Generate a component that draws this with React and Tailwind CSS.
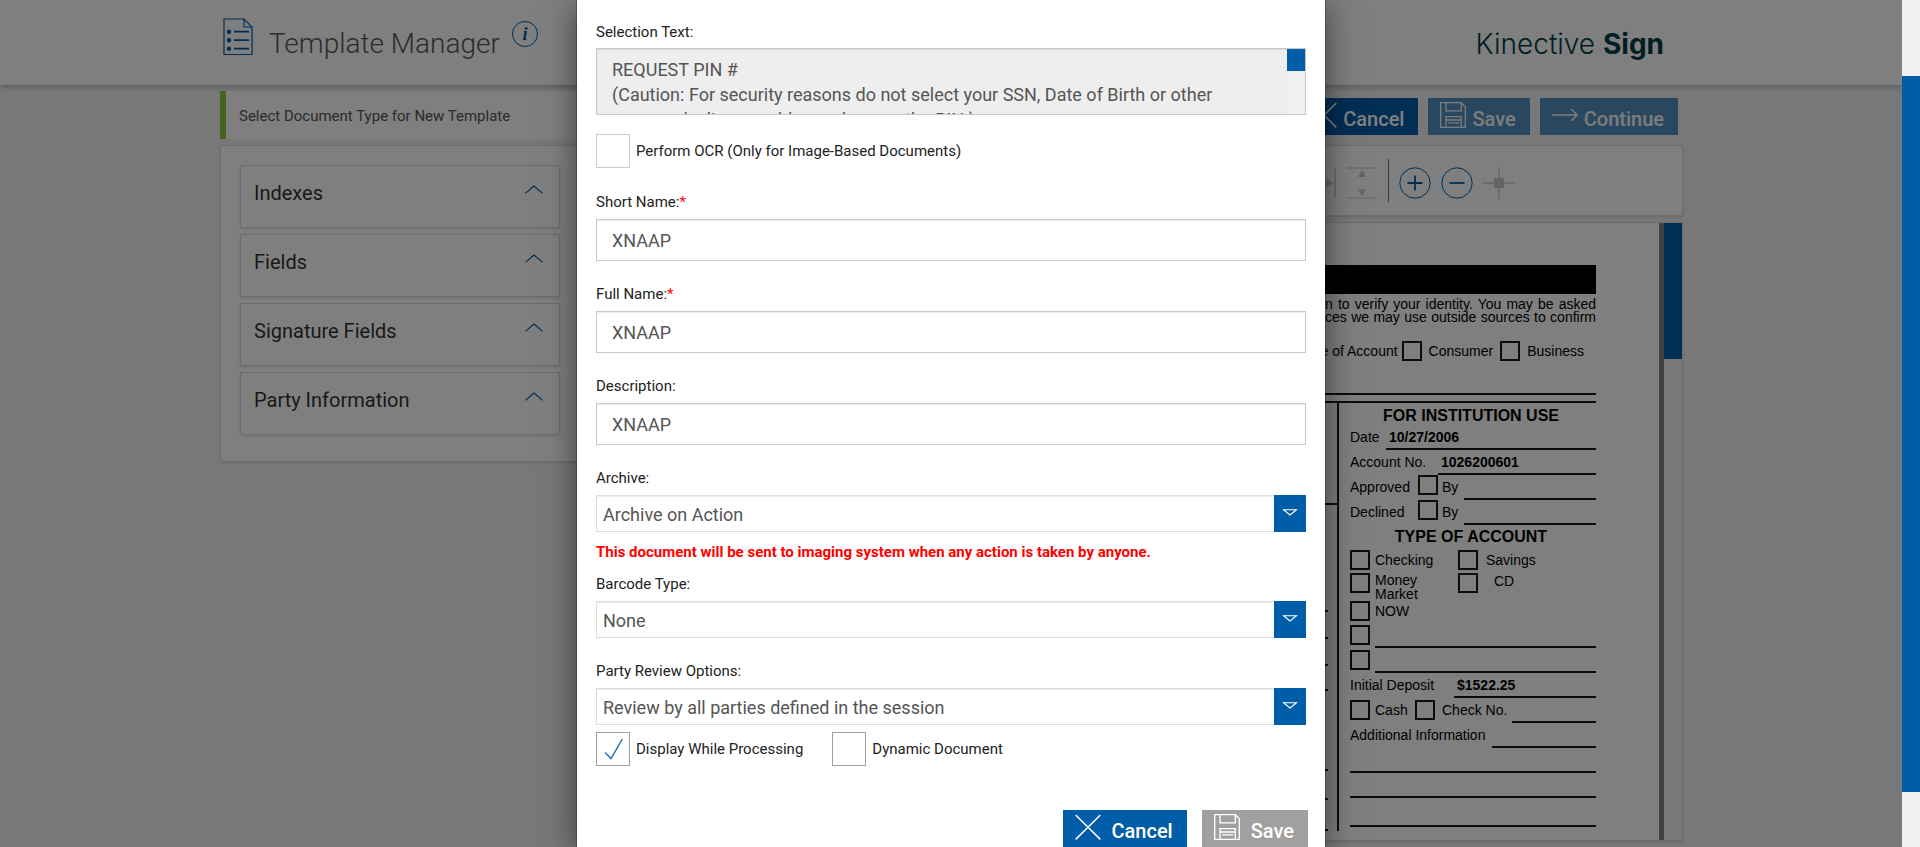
import React, { useState } from 'react';
import clsx from 'clsx';

const SELECTION_TEXT = `REQUEST PIN #
(Caution: For security reasons do not select your SSN, Date of Birth or other
commonly discoverable numbers as the PIN.)`;

const SECTIONS = ['Indexes', 'Fields', 'Signature Fields', 'Party Information'];

/* ---------- icons ---------- */

const CloseIcon = () => (
  <svg width="26" height="26" viewBox="0 0 26 26" fill="none" stroke="currentColor" strokeWidth="1.5">
    <path d="M.7 1l24.6 24.4M25.3 1L.7 25.4" />
  </svg>
);

const SaveIcon = () => (
  <svg width="26" height="26" viewBox="0 0 26 26" fill="none" stroke="currentColor" strokeWidth="1.3">
    <path d="M.7.7h20.6l4 4v20.6H.7z" />
    <path d="M6 .7v8.2h15.3V.7M6 25.3V14.6h15.3v10.7M6 18h15.3M8.2 20.8h11" />
  </svg>
);

const ArrowIcon = () => (
  <svg width="26" height="26" viewBox="0 0 26 26" fill="none" stroke="currentColor" strokeWidth="1.5">
    <path d="M0 13h25M19 7l6.2 6-6.2 6" />
  </svg>
);

const DocumentListIcon = () => (
  <svg width="30" height="38" viewBox="0 0 30 38" fill="none" stroke="#005da8" strokeWidth="1.2">
    <path d="M1 1h20l8 8v27.5H1z" />
    <path d="M21 1v8h8" />
    <path d="M11 13.7h15M11 22.2h15M11 30.7h15" strokeWidth="1.7" />
    <circle cx="6" cy="13.7" r="1.6" fill="#005da8" />
    <circle cx="6" cy="22.2" r="1.6" fill="#005da8" />
    <circle cx="6" cy="30.7" r="1.6" fill="#005da8" />
  </svg>
);

const ChevronUp = () => (
  <svg width="18" height="9" viewBox="0 0 18 9" fill="none" stroke="#005da8" strokeWidth="1.2">
    <path d="M.4 8.4L9 1l8.6 7.4" />
  </svg>
);

const FitWidthIcon = () => (
  <svg width="32" height="32" viewBox="0 0 32 32" fill="#c9c9c9" stroke="#c9c9c9">
    <path d="M1 1v30M31 1v30" strokeWidth="1.5" />
    <path d="M9 12.5L3 16l6 3.5zM22 11.5l7.5 4.5-7.5 4.5z" stroke="none" />
  </svg>
);

const FitHeightIcon = () => (
  <svg width="32" height="32" viewBox="0 0 32 32" fill="#c9c9c9" stroke="#c9c9c9">
    <path d="M1 1h30M1 31h30" />
    <path d="M12 10l4-7 4 7zM12 22.5h8l-4 6.5z" stroke="none" />
  </svg>
);

const ZoomIcon = ({ plus }) => (
  <svg width="32" height="32" viewBox="0 0 32 32" fill="none" stroke="#005da8">
    <circle cx="16" cy="16" r="15.2" />
    <path d={plus ? 'M8.5 16h15M16 8.5v15' : 'M8.5 16h15'} strokeWidth="1.8" />
  </svg>
);

const CrosshairIcon = () => (
  <svg width="32" height="32" viewBox="0 0 32 32" stroke="#c9c9c9">
    <path d="M0 16h32M16 0v32" strokeWidth="1.3" />
    <rect x="11" y="11" width="10" height="10" fill="#c9c9c9" stroke="none" />
  </svg>
);

/* ---------- shared controls ---------- */

const ActionButton = ({ icon, children, className, disabled }) => (
  <button
    type="button"
    disabled={disabled}
    className={clsx(
      'flex h-[37px] items-start pt-1 pr-[14px] pl-3 text-xl leading-[34px] font-medium text-white',
      className
    )}
  >
    {icon}
    <span>{children}</span>
  </button>
);

const TextField = ({ id, label, required, value }) => {
  const [text, setText] = useState(value);
  return (
    <div className="mt-[23px]">
      <label htmlFor={id} className="block">
        {label}
        {required && <span className="text-[#ff0000]">*</span>}
      </label>
      <input
        id={id}
        type="text"
        value={text}
        onChange={(e) => setText(e.target.value)}
        className="mt-[7px] block h-[42px] w-full border border-[#c8c8c8] bg-white px-[15px] text-lg text-[#555555] shadow-[inset_0_1px_1px_rgba(0,0,0,0.08)]"
      />
    </div>
  );
};

const SelectField = ({ id, label, option, className }) => (
  <div className={className}>
    <label htmlFor={id} className="block">{label}</label>
    <div className="relative mt-[7px]">
      <select
        id={id}
        className="block h-[37px] w-full appearance-none border border-[#dddddd] bg-white pt-[2px] pr-10 pl-[6px] text-lg text-[#555555] shadow-[inset_0_1px_1px_rgba(0,0,0,0.08)]"
      >
        <option>{option}</option>
      </select>
      <span className="pointer-events-none absolute inset-y-0 right-0 flex w-8 justify-center bg-[#005da8] pt-[14px]">
        <svg width="16" height="8" viewBox="0 0 16 8" fill="none" stroke="#fff" strokeWidth="1.1">
          <path d="M1.5.8h13L8 6z" />
        </svg>
      </span>
    </div>
  </div>
);

const CheckField = ({ label, defaultChecked, className }) => (
  <label className="flex items-center gap-[6px]">
    <span className="relative flex">
      <input
        type="checkbox"
        defaultChecked={defaultChecked}
        className={clsx('peer size-[34px] appearance-none border bg-white', className)}
      />
      <svg
        className="pointer-events-none absolute top-1.5 left-2 hidden peer-checked:block"
        width="20" height="22" viewBox="0 0 20 22" fill="none" stroke="#1f73bd" strokeWidth="1.4"
      >
        <path d="M1 14.5l6 6L18.5.8" />
      </svg>
    </span>
    {label}
  </label>
);

/* ---------- scanned account form ---------- */

const DocBox = ({ className }) => (
  <span className={clsx('inline-block size-5 shrink-0 border-2 border-black/90', className)} />
);

// one ruled row: whatever stands left of the rule, then the rule to the margin
const RuledRow = ({ children }) => (
  <div className="flex h-[25px] items-start">
    {children}
    <span className="h-full flex-1 border-b-2 border-black/90" />
  </div>
);

// a row whose rule carries a typed value
const ValueRow = ({ label, labelClass, children }) => (
  <div className="flex h-[25px] items-start">
    <span className={clsx('pt-[2px]', labelClass)}>{label}</span>
    <div className="h-full flex-1 border-b-2 border-black/90 pt-[2px] pl-[3px] font-bold">{children}</div>
  </div>
);

const LEFT_TICKS = ['h-[107px]', 'h-[27px]', 'h-[27px]', 'h-[25px]', 'h-[80px]', 'h-[29px]', 'h-[31px]'];

const AccountForm = () => (
  <div className="pt-[42px] pr-[63px] font-['Liberation_Sans',Arial,sans-serif] text-sm text-black">
    <div className="h-[29px] bg-black" />
    <div className="ml-auto w-[271px] pt-[4px] leading-[13px]">
      <p className="text-justify [text-align-last:justify]">n to verify your identity. You may be asked</p>
      <p className="text-justify [text-align-last:justify]">ces we may use outside sources to confirm</p>
    </div>
    <div className="mt-[17px] flex items-center justify-end pr-3">
      <span>Type of Account</span>
      <DocBox className="ml-1" />
      <span className="ml-[7px]">Consumer</span>
      <DocBox className="ml-[7px]" />
      <span className="ml-[7px]">Business</span>
    </div>
    <div className="mt-8 h-2 border-t-2 border-black/90" />
    <div className="flex border-t-2 border-black/90">
      <div className="flex-1">
        <div className="h-[102px] border-b-2 border-black/90" />
        <div className="pr-[9px]">
          {LEFT_TICKS.map((height, i) => (
            <div key={i} className={clsx('border-b-2 border-black/90', height)} />
          ))}
        </div>
      </div>
      <div className="w-[259px] border-l-2 border-black/90 pl-[11px]">
        <h3 className="h-[22px] pt-1 pr-1 text-center text-base leading-[18px] font-bold">FOR INSTITUTION USE</h3>
        <ValueRow label="Date" labelClass="w-[36px]">10/27/2006</ValueRow>
        <ValueRow label="Account No." labelClass="w-[88px]">1026200601</ValueRow>
        <RuledRow>
          <span className="w-[68px] pt-[2px]">Approved</span>
          <DocBox />
          <span className="w-[26px] pt-[2px] pl-1">By</span>
        </RuledRow>
        <RuledRow>
          <span className="w-[68px] pt-[2px]">Declined</span>
          <DocBox />
          <span className="w-[26px] pt-[2px] pl-1">By</span>
        </RuledRow>
        <h3 className="h-[23px] pt-[2px] pr-1 text-center text-base leading-[20px] font-bold">TYPE OF ACCOUNT</h3>
        <div className="flex h-[25px] pt-[2px]">
          <DocBox />
          <span className="w-[88px] pl-[5px]">Checking</span>
          <DocBox />
          <span className="pl-2">Savings</span>
        </div>
        <div className="flex h-[25px] items-start">
          <DocBox />
          <span className="w-[88px] pl-[5px] leading-[14px]">Money<br />Market</span>
          <DocBox />
          <span className="pl-4 leading-[16px]">CD</span>
        </div>
        <div className="flex h-[25px] items-start pt-[3px]">
          <DocBox />
          <span className="pl-[5px]">NOW</span>
        </div>
        <RuledRow><DocBox className="mt-[2px] mr-[5px]" /></RuledRow>
        <RuledRow><DocBox className="mt-[2px] mr-[5px]" /></RuledRow>
        <ValueRow label="Initial Deposit" labelClass="w-[104px]">$1522.25</ValueRow>
        <RuledRow>
          <DocBox className="mt-[2px]" />
          <span className="w-[45px] pt-[2px] pl-[5px]">Cash</span>
          <DocBox className="mt-[2px]" />
          <span className="w-[77px] pt-[2px] pl-[7px]">Check No.</span>
        </RuledRow>
        <RuledRow><span className="w-[142px] pt-[2px]">Additional Information</span></RuledRow>
        <RuledRow />
        <RuledRow />
        <div className="h-[29px] border-b-2 border-black/90" />
      </div>
    </div>
  </div>
);

/* ---------- page behind the dialog ---------- */

const TemplatePage = () => (
  <div className="h-full bg-[#f0f0f0]">
    <header className="h-[85px] bg-white px-[220px] shadow-[0_2px_6px_rgba(0,0,0,0.25)]">
      <div className="flex items-start pr-[18px] pl-[3px] text-[#58595b]">
        <span className="mt-[18px]"><DocumentListIcon /></span>
        <h1 className="mt-6 ml-4 text-[28px] leading-[40px] font-light">Template Manager</h1>
        <button
          type="button"
          aria-label="Information"
          className="mt-[21px] ml-3 size-[26px] rounded-full border border-[#005da8] font-['Liberation_Serif',serif] text-lg leading-6 font-bold text-[#005da8] italic"
        >
          i
        </button>
        <div className="mt-6 ml-auto font-['Inter',sans-serif] text-[28px] leading-[40px] font-light text-[#023e45]">
          Kinective <span className="font-bold">Sign</span>
        </div>
      </div>
    </header>

    <div className="mr-[219px] ml-[220px] pt-[6px]">
      <div className="flex items-start justify-between">
        <div className="flex h-12 w-[760px] items-center border-l-[6px] border-[#8dc63f] bg-white pt-[2px] pl-[13px] text-[15px] text-[#555555]">
          Select Document Type for New Template
        </div>
        <div className="mt-[7px] mr-[5px] flex gap-[10px]">
          <ActionButton icon={<CloseIcon />} className="gap-[6px] bg-[#005da8]">Cancel</ActionButton>
          <ActionButton icon={<SaveIcon />} disabled className="gap-[6px] bg-[#005da8] opacity-65">Save</ActionButton>
          <ActionButton icon={<ArrowIcon />} disabled className="gap-[6px] bg-[#005da8] opacity-65">Continue</ActionButton>
        </div>
      </div>

      <div className="mt-[6px] flex items-start gap-[10px]">
        <aside className="w-[380px] border border-[#dddddd] bg-white px-[19px] pt-[19px] pb-[26px] shadow-sm">
          <div className="flex flex-col gap-[6px]">
            {SECTIONS.map((section) => (
              <button
                key={section}
                type="button"
                className="flex h-[63px] w-[320px] items-start justify-between border border-[#dddddd] bg-white pt-[13px] pr-4 pl-[13px] text-xl leading-7 text-[#333333] shadow-sm"
              >
                {section}
                <span className="pt-[6px]"><ChevronUp /></span>
              </button>
            ))}
          </div>
        </aside>

        <section className="flex-1">
          <div className="flex h-[71px] items-center justify-end gap-[10px] border border-[#dddddd] bg-white pt-1 pr-[167px] shadow-sm">
            <FitWidthIcon />
            <FitHeightIcon />
            <span className="-mt-1 h-[43px] w-px bg-[#777777]" />
            <ZoomIcon plus />
            <ZoomIcon />
            <CrosshairIcon />
          </div>
          <div className="mt-[6px] flex h-[619px] overflow-hidden border border-[#dddddd] bg-white shadow-sm">
            <div className="flex-1"><AccountForm /></div>
            <div className="w-[5px] bg-[#808080]" />
            <div className="w-[18px] bg-[#f1f1f1]">
              <div className="h-[136px] bg-[#005da8]" />
            </div>
          </div>
        </section>
      </div>
    </div>
  </div>
);

/* ---------- dialog ---------- */

const DocumentDialog = () => (
  <div
    role="dialog"
    aria-modal="true"
    className="mx-auto min-h-full w-[750px] border-x border-black/20 bg-white bg-clip-padding px-[19px] pt-[22px] text-[15px] leading-5 text-[#222222] shadow-[0_5px_30px_rgba(0,0,0,0.5)]"
  >
    <label htmlFor="selection-text" className="block">Selection Text:</label>
    <div className="relative mt-[6px]">
      <textarea
        id="selection-text"
        readOnly
        value={SELECTION_TEXT}
        className="block h-[67px] w-full resize-none overflow-hidden border border-[#c8c8c8] bg-[#eeeeee] pt-2 pr-8 pl-[15px] text-lg leading-[25px] text-[#555555] shadow-[inset_0_1px_1px_rgba(0,0,0,0.08)]"
      />
      <span className="absolute inset-y-px right-px w-[18px] bg-[#f1f1f1]">
        <span className="block h-[22px] bg-[#005da8]" />
      </span>
    </div>

    <div className="mt-[19px]">
      <CheckField label="Perform OCR (Only for Image-Based Documents)" className="border-[#cccccc]" />
    </div>

    <div className="pt-px">
      <TextField id="short-name" label="Short Name:" required value="XNAAP" />
      <TextField id="full-name" label="Full Name:" required value="XNAAP" />
      <TextField id="description" label="Description:" value="XNAAP" />
    </div>

    <SelectField id="archive" label="Archive:" option="Archive on Action" className="mt-[23px]" />
    <p className="mt-[10px] font-bold text-[#ff0000]">
      This document will be sent to imaging system when any action is taken by anyone.
    </p>
    <SelectField id="barcode" label="Barcode Type:" option="None" className="mt-3" />
    <SelectField
      id="review"
      label="Party Review Options:"
      option="Review by all parties defined in the session"
      className="mt-[23px]"
    />

    <div className="mt-[7px] flex gap-[29px]">
      <CheckField label="Display While Processing" defaultChecked className="border-[#a0a0a0]" />
      <CheckField label="Dynamic Document" className="border-[#a0a0a0]" />
    </div>

    <div className="mt-11 -mr-[2px] flex justify-end gap-[15px]">
      <ActionButton icon={<CloseIcon />} className="gap-[11px] bg-[#005da8]">Cancel</ActionButton>
      <ActionButton icon={<SaveIcon />} disabled className="gap-[11px] bg-[#a1a09f]">Save</ActionButton>
    </div>
  </div>
);

const App = () => (
  <div className="flex h-screen font-['Roboto',sans-serif]">
    <div className="relative flex-1 overflow-hidden">
      <TemplatePage />
      <div className="absolute inset-0 overflow-hidden bg-black/50">
        <DocumentDialog />
      </div>
    </div>
    <div className="w-[18px] bg-[#f1f1f1]">
      <div className="h-[9%]" />
      <div className="h-[84.5%] bg-[#005da8]" />
    </div>
  </div>
);

export default App;
